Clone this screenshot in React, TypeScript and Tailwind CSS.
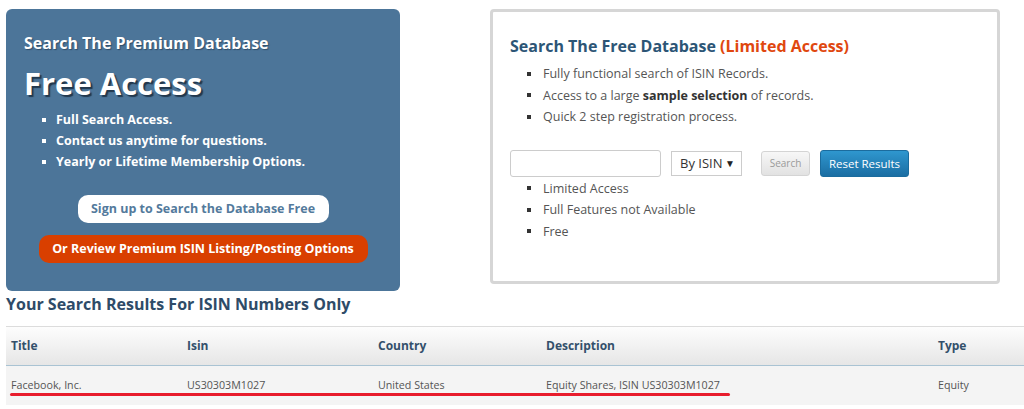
export default function App() {
  const premium = [
    "Full Search Access.",
    "Contact us anytime for questions.",
    "Yearly or Lifetime Membership Options.",
  ];
  const limits = ["Limited Access", "Full Features not Available", "Free"];

  return (
    <div className="min-h-screen w-full bg-white font-['Open_Sans',sans-serif] overflow-hidden">
      {/* Top panels */}
      <div className="flex items-start pt-[9px] pl-[6px]">
        {/* Premium panel */}
        <div className="w-[394px] rounded-[6px] bg-[#4c7599] px-[18px] pt-[24px] pb-[28px]">
          <h3 className="text-[16px] leading-[20px] font-bold text-white [text-shadow:1px_1px_1px_rgba(20,40,60,0.5)]">
            Search The Premium Database
          </h3>
          <h1 className="mt-3 text-[31px] leading-[36px] font-bold text-white [text-shadow:2px_2px_1px_#22384d]">
            Free Access
          </h1>
          <ul className="mt-2 pl-[18px]">
            {premium.map((p) => (
              <li key={p} className="flex items-center gap-[10px] text-[12.5px] leading-[21px] font-bold text-white">
                <span className="w-[4px] h-[4px] bg-white shrink-0" />
                {p}
              </li>
            ))}
          </ul>
          <div className="mt-[23px] flex flex-col items-center gap-3">
            <button className="w-[251px] h-[28px] rounded-[10px] bg-white text-[12.5px] font-bold text-[#537a9c]">
              Sign up to Search the Database Free
            </button>
            <button className="w-[329px] h-[28px] rounded-[10px] bg-[#d93f00] text-[12.5px] font-bold text-white">
              Or Review Premium ISIN Listing/Posting Options
            </button>
          </div>
        </div>

        {/* Free panel */}
        <div className="ml-[90px] w-[510px] h-[275px] rounded-[4px] border-[3px] border-[#d6d6d6] pl-[17px] pt-[23px]">
          <h2 className="text-[16px] leading-[22px] font-bold text-[#2c5576]">
            Search The Free Database <span className="text-[#e0470f]">(Limited Access)</span>
          </h2>
          <ul className="mt-[6px] pl-[17px]">
            <li className="flex items-center gap-[12px] text-[12.5px] leading-[21.5px] text-[#555]">
              <span className="w-[4px] h-[4px] bg-[#333] shrink-0" />
              Fully functional search of ISIN Records.
            </li>
            <li className="flex items-center gap-[12px] text-[12.5px] leading-[21.5px] text-[#555]">
              <span className="w-[4px] h-[4px] bg-[#333] shrink-0" />
              <span>
                Access to a large <b className="text-[#333]">sample selection</b> of records.
              </span>
            </li>
            <li className="flex items-center gap-[12px] text-[12.5px] leading-[21.5px] text-[#555]">
              <span className="w-[4px] h-[4px] bg-[#333] shrink-0" />
              Quick 2 step registration process.
            </li>
          </ul>

          <div className="mt-[22px] flex items-center h-[28px]">
            <input
              className="w-[151px] h-[27px] rounded-[3px] border border-[#cccccc] bg-white outline-none"
              type="text"
            />
            <div className="ml-[10px] w-[71px] h-[25px] border border-[#cccccc] bg-white flex items-center justify-between pl-[8px] pr-[6px] text-[13px] text-[#333]">
              <span>By ISIN</span>
              <span className="text-[10px] text-[#222]">▼</span>
            </div>
            <button className="ml-[19px] w-[49px] h-[25px] rounded-[3px] border border-[#d4d4d4] bg-gradient-to-b from-[#f7f7f7] to-[#e2e2e2] text-[10px] text-[#9a9a9a]">
              Search
            </button>
            <button className="ml-[10px] w-[89px] h-[27px] rounded-[3px] border border-[#1b6c9e] bg-gradient-to-b from-[#2f97cf] to-[#1b6ea3] text-[11.5px] text-white">
              Reset Results
            </button>
          </div>

          <ul className="pl-[17px]">
            {limits.map((l) => (
              <li key={l} className="flex items-center gap-[12px] text-[12.5px] leading-[21.5px] text-[#555]">
                <span className="w-[4px] h-[4px] bg-[#333] shrink-0" />
                {l}
              </li>
            ))}
          </ul>
        </div>
      </div>

      {/* Results */}
      <h2 className="mt-[2px] ml-[6px] text-[16px] leading-[22px] font-bold text-[#2e4b68]">
        Your Search Results For ISIN Numbers Only
      </h2>

      <div className="mt-[11px] ml-[6px] relative">
        <div className="grid grid-cols-[176px_191px_168px_392px_1fr] h-[40px] items-center border-t border-[#dcdcdc] border-b border-b-[#a9c3d3] bg-gradient-to-b from-[#fdfdfd] to-[#e6e6e6] text-[12px] font-bold text-[#33506b]">
          <div className="pl-[5px]">Title</div>
          <div className="pl-[5px]">Isin</div>
          <div className="pl-[5px]">Country</div>
          <div className="pl-[5px]">Description</div>
          <div className="pl-[5px]">Type</div>
        </div>
        <div className="grid grid-cols-[176px_191px_168px_392px_1fr] h-[39px] items-center bg-[#f4f4f4] text-[10.7px] text-[#555]">
          <div className="pl-[5px]">Facebook, Inc.</div>
          <div className="pl-[5px]">US30303M1027</div>
          <div className="pl-[5px]">United States</div>
          <div className="pl-[5px]">Equity Shares, ISIN US30303M1027</div>
          <div className="pl-[5px]">Equity</div>
        </div>
        {/* red annotation underline */}
        <div className="absolute left-[4px] top-[67px] w-[720px] h-[3px] rounded-full bg-[#e81c2c]" />
      </div>
    </div>
  );
}
